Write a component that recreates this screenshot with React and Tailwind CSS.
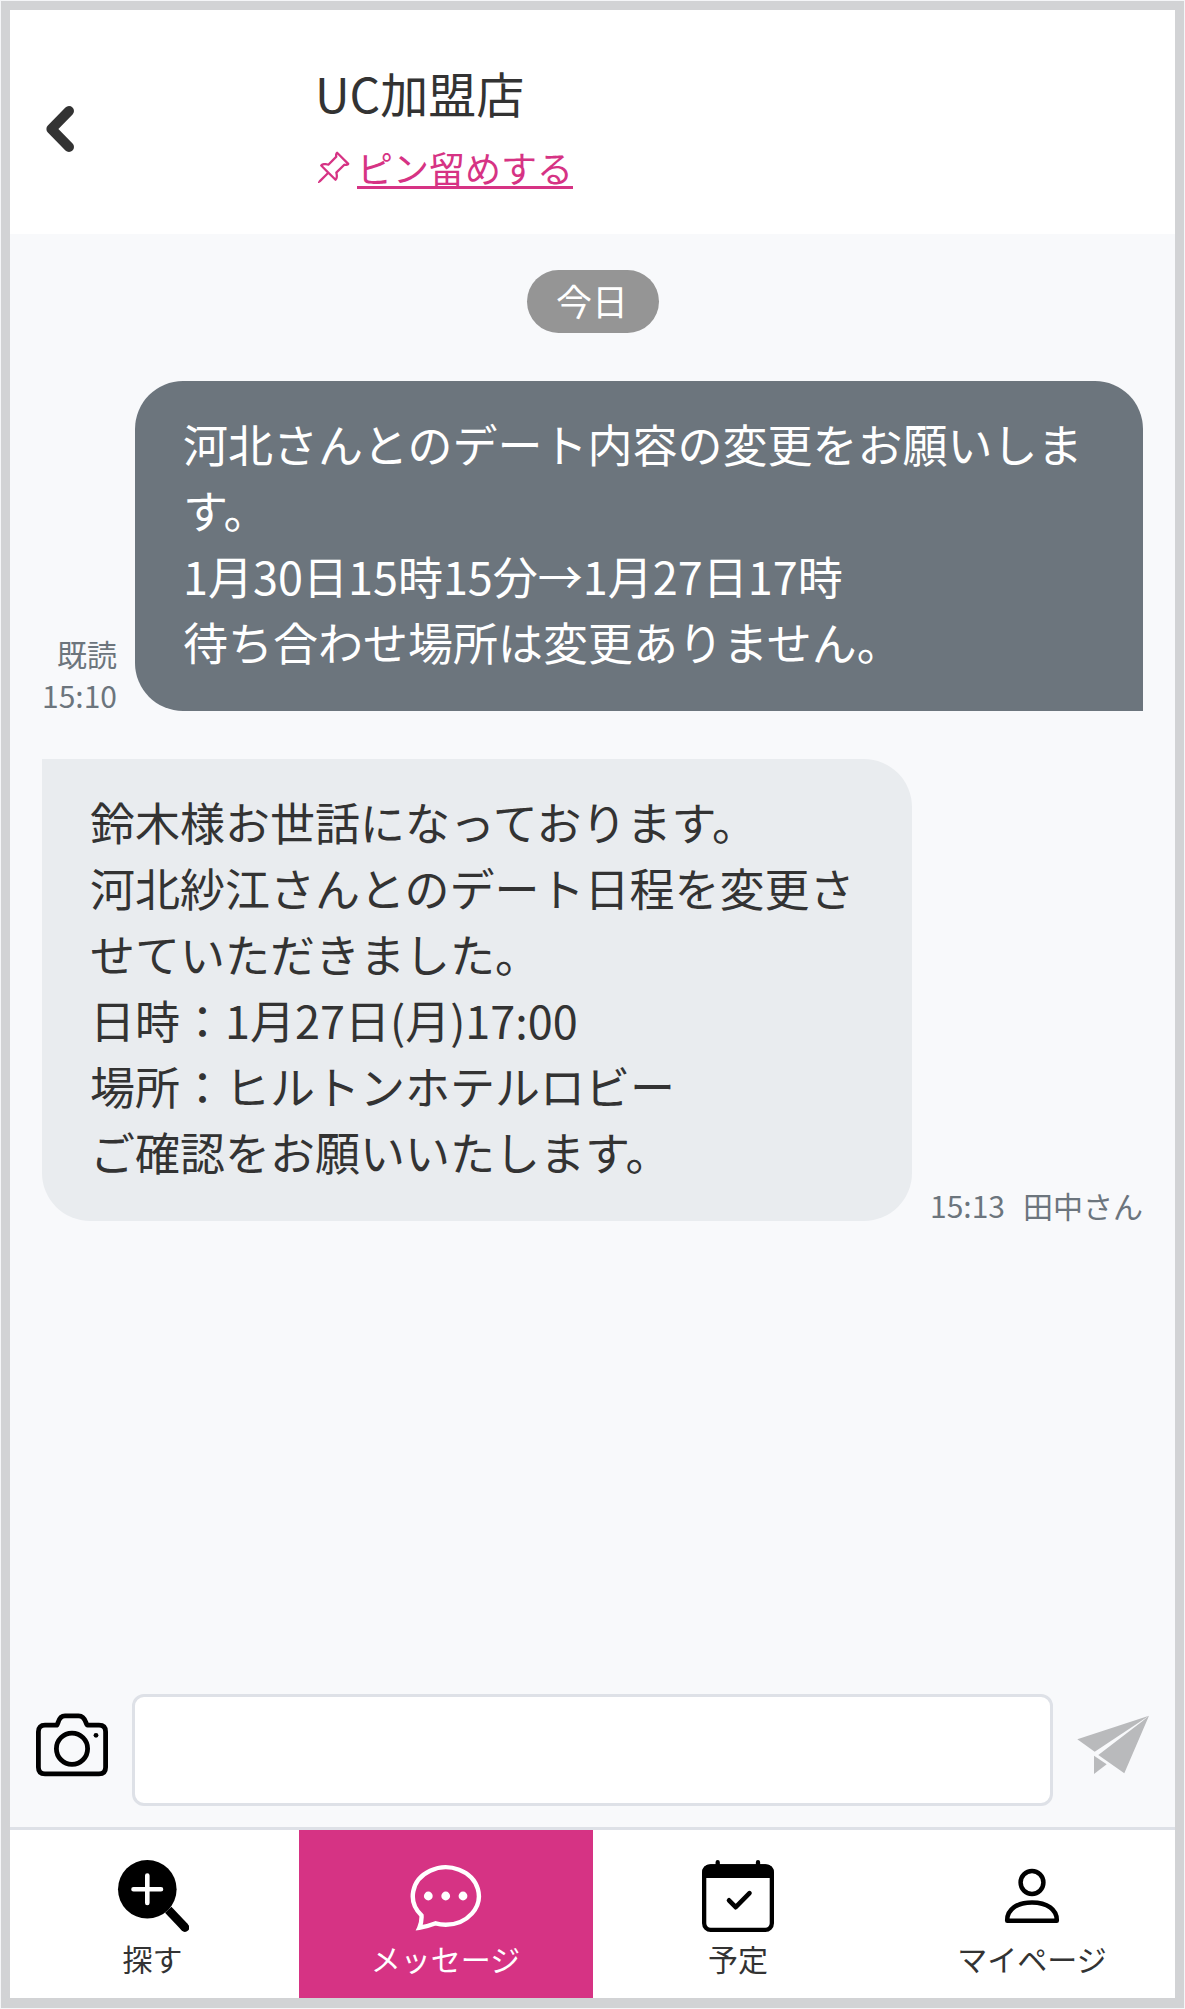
import clsx from 'clsx';
import { BsPinAngle } from 'react-icons/bs';

const messages = [
  {
    id: 1,
    mine: true,
    time: '15:10',
    read: true,
    text: '河北さんとのデート内容の変更をお願いします。\n1月30日15時15分→1月27日17時\n待ち合わせ場所は変更ありません。',
  },
  {
    id: 2,
    mine: false,
    time: '15:13',
    sender: '田中さん',
    text: '鈴木様お世話になっております。\n河北紗江さんとのデート日程を変更させていただきました。\n日時：1月27日(月)17:00\n場所：ヒルトンホテルロビー\nご確認をお願いいたします。',
  },
];

const ChevronIcon = () => (
  <svg width="28" height="46" viewBox="0 0 28 46" fill="none" stroke="currentColor" strokeWidth="10" strokeLinecap="round" strokeLinejoin="round">
    <path d="M23 5 L5.4 23 L23 41" />
  </svg>
);

const CameraIcon = () => (
  <svg width="72" height="72" viewBox="0 0 72 72" fill="none" stroke="currentColor" strokeWidth="4.8">
    <path d="M9 16.2 H20.5 C22.5 16.2 21.5 6.9 29 6.9 H42.5 C50.5 6.9 49.5 16.2 51.5 16.2 H63 Q69.6 16.2 69.6 22.8 V58.2 Q69.6 64.8 63 64.8 H9 Q2.4 64.8 2.4 58.2 V22.8 Q2.4 16.2 9 16.2 Z" />
    <circle cx="36" cy="39.7" r="15.6" />
    <circle cx="60" cy="26.3" r="2.4" fill="currentColor" stroke="none" />
  </svg>
);

const SendIcon = () => (
  <svg width="72" height="72" viewBox="0 0 72 72" fill="currentColor">
    <path d="M0.3 30.3 L72 6.7 L17.7 42.7 Z" />
    <path d="M72 6.7 L47.3 64.3 L21.3 46 L65 12.5 Z" />
    <path d="M17 46.7 L29.7 55.3 L17 65 Z" />
  </svg>
);

const SearchIcon = () => (
  <svg width="72" height="72" viewBox="0 0 72 72" fill="none">
    <circle cx="30.3" cy="29.3" r="29.3" fill="currentColor" />
    <path d="M16.5 29.3 H44 M30.3 15.5 V43" stroke="white" strokeWidth="4.6" strokeLinecap="round" />
    <path d="M51.2 49.7 L67.8 67.3" stroke="currentColor" strokeWidth="8.8" />
    <circle cx="67.9" cy="67.5" r="4.4" fill="currentColor" />
  </svg>
);

const MessageIcon = () => (
  <svg width="72" height="72" viewBox="0 0 72 72" fill="none" stroke="currentColor" strokeWidth="4.4">
    <path d="M25.7 63.3 C29 64.3 32 64.7 35.8 64.7 A33 28.7 0 1 0 11.5 55.4 C11.8 60 10.8 64.5 9.3 67.8 C15 67 20 65.5 25.7 63.3 Z" />
    <g fill="currentColor" stroke="none">
      <circle cx="18.3" cy="36" r="4.4" />
      <circle cx="35.7" cy="36" r="4.4" />
      <circle cx="53" cy="36" r="4.4" />
    </g>
  </svg>
);

const CalendarIcon = () => (
  <svg width="72" height="72" viewBox="0 0 72 72" fill="none" stroke="currentColor" strokeWidth="4.3" strokeLinecap="round" strokeLinejoin="round">
    <rect x="2.15" y="6.45" width="67.7" height="63.4" rx="6.5" />
    <path d="M0 18 V13 Q0 4.3 9 4.3 H63 Q72 4.3 72 13 V18 Z" fill="currentColor" stroke="none" />
    <path d="M15.7 2.2 V8 M56 2.2 V8" />
    <path d="M27 40.3 L33.7 47.2 L47.5 33.2" strokeWidth="4.6" />
  </svg>
);

const PersonIcon = () => (
  <svg width="72" height="72" viewBox="0 0 72 72" fill="none" stroke="currentColor" strokeWidth="4.5" strokeLinejoin="round">
    <circle cx="36" cy="22.5" r="11.4" />
    <path d="M11.2 60.7 C10.8 49.5 21 42.4 36 42.4 S61.2 49.5 60.8 60.7 Z" />
  </svg>
);

const tabs = [
  { label: '探す', icon: SearchIcon, className: 'w-[289px] pr-1' },
  { label: 'メッセージ', icon: MessageIcon, className: 'w-[294px] pr-px', active: true },
  { label: '予定', icon: CalendarIcon, className: 'w-[293px] pr-[3px]' },
  { label: 'マイページ', icon: PersonIcon, className: 'w-[289px] pl-[3px]' },
];

const Message = ({ message }) => {
  const { mine, time, read, sender, text } = message;

  return (
    <div className={clsx('flex items-end gap-[18px]', mine && 'flex-row-reverse')}>
      <p
        className={clsx(
          'whitespace-pre-wrap px-12 pt-[30px] pb-9 text-[45px] leading-[66px]',
          mine
            ? 'w-[1008px] rounded-[48px] rounded-br-none bg-[#6c757d] text-white'
            : 'w-[870px] rounded-[48px] rounded-tl-none bg-[#e9ecef]'
        )}
      >
        {text}
      </p>
      <div
        className={clsx(
          '-mb-[5px] flex text-[30px] leading-[42px] text-[#6c757d]',
          mine ? 'flex-col items-end' : 'gap-[18px]'
        )}
      >
        {read && <span>既読</span>}
        <span>{time}</span>
        {sender && <span>{sender}</span>}
      </div>
    </div>
  );
};

const App = () => {
  return (
    <div
      lang="ja"
      className="h-[2009px] w-[1185px] bg-[#f5f6f8] p-px font-['Noto_Sans_CJK_JP',sans-serif] text-[#333]"
    >
      <div className="flex h-full flex-col border-[9px] border-b-[10px] border-[#d2d3d5] bg-[#f8f9fb]">
        {/* Header */}
        <header className="flex h-[224px] items-start bg-white">
          <button className="mt-24 ml-9 w-[269px]" aria-label="戻る">
            <ChevronIcon />
          </button>
          <div className="pt-[46px]">
            <h1 className="text-[48px] leading-[72px]">UC加盟店</h1>
            <div className="mt-3 flex items-start text-[#d63384]">
              <BsPinAngle className="mt-2.5 mr-1.5 size-9" />
              <a href="#" className="h-[49px] border-b-[3px] border-[#d63384] text-[36px] leading-[54px]">
                ピン留めする
              </a>
            </div>
          </div>
        </header>

        {/* Conversation */}
        <main className="flex flex-1 flex-col px-8 pt-9">
          <div className="mb-12 flex h-[63px] w-[132px] items-center justify-center self-center rounded-full bg-[#959595] pr-px pb-[3px] text-[36px] leading-none text-white">
            今日
          </div>
          <div className="flex flex-col gap-12">
            {messages.map((message) => (
              <Message key={message.id} message={message} />
            ))}
          </div>
        </main>

        {/* Input row */}
        <form className="flex h-[133px] items-start justify-between pr-[26px] pl-[26px]">
          <button type="button" className="mt-[15px] text-black" aria-label="写真">
            <CameraIcon />
          </button>
          <input className="h-[112px] w-[921px] rounded-xl border-[3px] border-[#dee1e7] bg-white px-6 text-[45px] outline-none" />
          <button type="button" className="mt-[15px] text-[#b9babc]" aria-label="送信">
            <SendIcon />
          </button>
        </form>

        {/* Bottom tabs */}
        <nav className="flex h-[171px] border-t-[3px] border-[#dee1e7] bg-white">
          {tabs.map(({ label, icon: Icon, className, active }) => (
            <a
              key={label}
              href="#"
              className={clsx('flex flex-col items-center pt-[30px]', className, active && 'bg-[#d63384] text-white')}
            >
              <span className={active ? 'text-white' : 'text-black'}>
                <Icon />
              </span>
              <span className="mt-[5px] text-[30px] leading-[42px]">{label}</span>
            </a>
          ))}
        </nav>
      </div>
    </div>
  );
};

export default App;
